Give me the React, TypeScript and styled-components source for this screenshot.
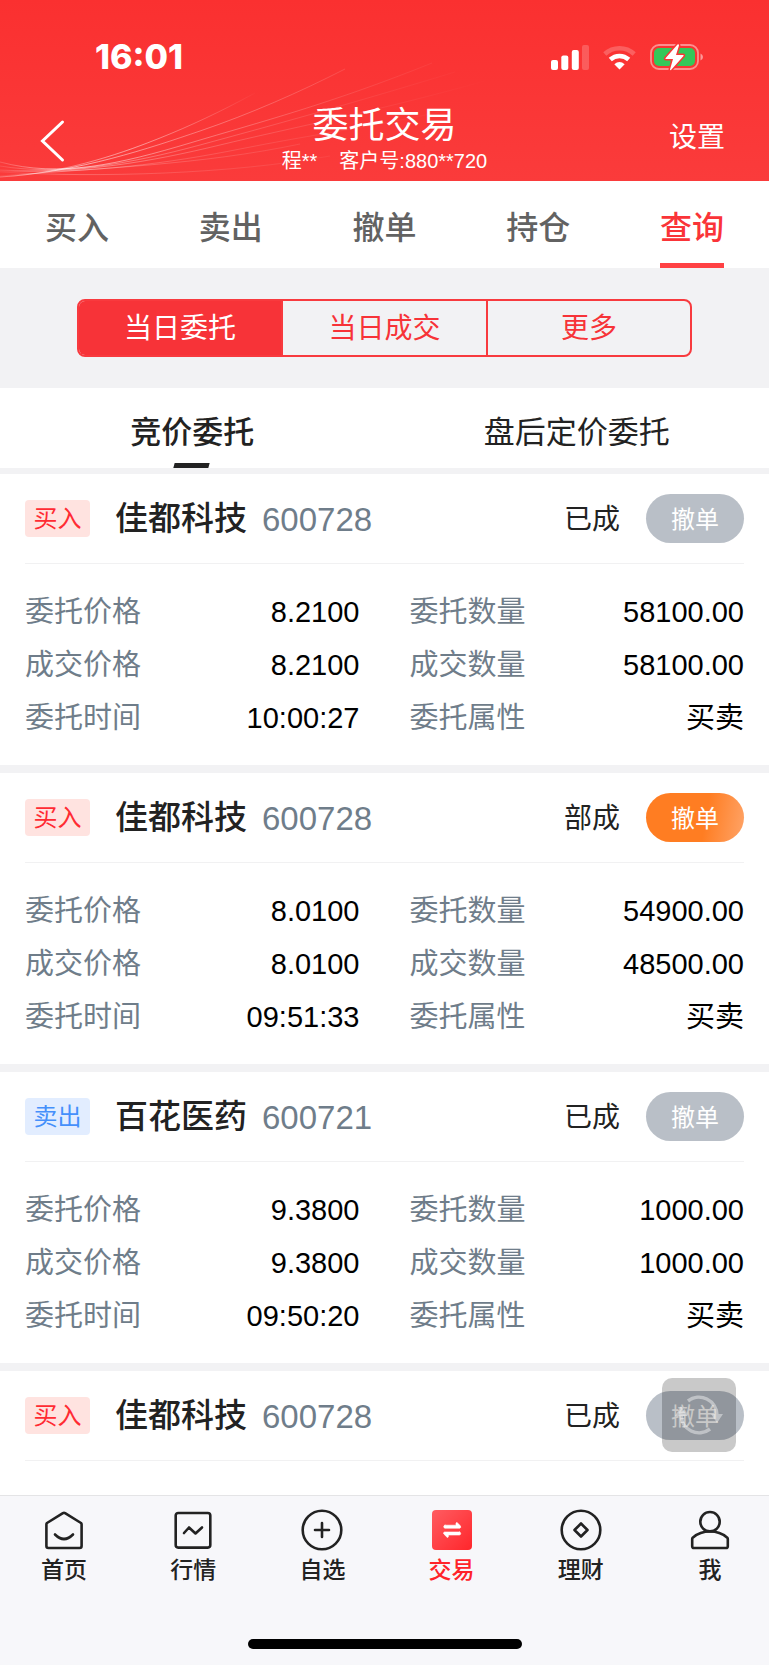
import React from "react";
import styled, { createGlobalStyle, css } from "styled-components";

const GlobalStyle = createGlobalStyle`
  *, *::before, *::after { box-sizing: border-box; }
  body {
    margin: 0;
    background: #fff;
    color: #222;
    font-family: "Liberation Sans", "Noto Sans CJK SC", sans-serif;
  }
  button {
    margin: 0;
    padding: 0;
    border: 0;
    background: none;
    color: inherit;
    font: inherit;
    cursor: pointer;
  }
  h1, h2, dl, dd, dt { margin: 0; font-weight: 400; }
`;

const Screen = styled.div`
  position: relative;
  display: flex;
  flex-direction: column;
  height: 100vh;
  overflow: hidden;
  background: #fff;
`;

/* ---------- header ---------- */

const Header = styled.header`
  position: relative;
  flex: none;
  height: 181px;
  color: #fff;
  background: linear-gradient(#fa3030, #fa3b3b);
`;

const Waves = styled.svg`
  position: absolute;
  left: 0;
  bottom: 0;
`;

const StatusBar = styled.div`
  position: relative;
  display: flex;
  align-items: center;
  justify-content: space-between;
  height: 104px;
  padding: 10px 65px 0 95px;
`;

const Clock = styled.time`
  font: 800 34px/40px Inter, sans-serif;
`;

const StatusIcons = styled.div`
  display: flex;
  align-items: center;
  gap: 14px;
`;

const TitleBar = styled.div`
  position: relative;
  display: grid;
  grid-template-columns: 1fr auto 1fr;
  align-items: center;
  height: 74px;
  padding: 0 40px;
`;

const BackButton = styled.button`
  justify-self: start;
  display: flex;
`;

const SettingsButton = styled.button`
  justify-self: end;
  padding: 0 4px 6px;
  font-size: 28px;
  line-height: 40px;
`;

const TitleBlock = styled.div`
  display: flex;
  flex-direction: column;
  align-items: center;
`;

const Title = styled.h1`
  font-size: 36px;
  line-height: 40px;
`;

const Account = styled.div`
  display: flex;
  gap: 22px;
  font-size: 20px;
  line-height: 30px;
`;

/* ---------- navigation ---------- */

const MainTabs = styled.nav`
  display: flex;
  flex: none;
  height: 87px;
`;

const MainTab = styled.button<{ $active?: boolean }>`
  flex: 1;
  display: flex;
  justify-content: center;
  font-size: 32px;
  font-weight: 500;
  color: ${(p) => (p.$active ? "#fa3438" : "#626262")};

  span {
    display: flex;
    align-items: center;
    height: 87px;
    padding-top: 6px;
    border-bottom: 5px solid ${(p) => (p.$active ? "#ff4144" : "transparent")};
  }
`;

const SegmentArea = styled.div`
  flex: none;
  padding: 31px 10%;
  background: #f2f2f4;
`;

const Segments = styled.div`
  display: flex;
  height: 58px;
  border: 2px solid #f83a3e;
  border-radius: 8px;
  overflow: hidden;
`;

const Segment = styled.button<{ $active?: boolean }>`
  flex: 1;
  padding-bottom: 4px;
  font-size: 28px;
  color: #f73338;

  & + & { border-left: 2px solid #f83a3e; }

  ${(p) =>
    p.$active &&
    css`
      background: #f73338;
      color: #fff;
    `}
`;

const SubTabs = styled.div`
  display: flex;
  flex: none;
  height: 86px;
  padding-bottom: 6px;
  background: linear-gradient(#fff 80px, #f2f2f4 80px);
`;

const SubTab = styled.button<{ $active?: boolean }>`
  position: relative;
  flex: 1;
  padding-top: 3px;
  font-size: 31px;
  font-weight: ${(p) => (p.$active ? 500 : 400)};

  ${(p) =>
    p.$active &&
    css`
      &::after {
        content: "";
        position: absolute;
        left: 50%;
        bottom: 0;
        width: 35px;
        height: 5px;
        margin-left: -18px;
        background: #222;
        transform: skewX(-15deg);
      }
    `}
`;

/* ---------- order list ---------- */

const OrderList = styled.main`
  flex: 1;
  min-height: 0;
  overflow-y: auto;
  scrollbar-width: none;
`;

const Card = styled.article`
  padding: 0 25px;

  & + & { border-top: 8px solid #f2f2f4; }
`;

const CardHead = styled.div`
  display: flex;
  align-items: center;
  height: 90px;
  border-bottom: 1px solid #f1f1f2;
`;

const SideTag = styled.span<{ $side: Side }>`
  width: 65px;
  margin-right: 25px;
  border-radius: 4px;
  font-size: 24px;
  line-height: 37px;
  text-align: center;
  color: ${(p) => (p.$side === "买入" ? "#ff2b33" : "#4590fb")};
  background: ${(p) => (p.$side === "买入" ? "#ffe3e0" : "#e2edff")};
`;

const StockName = styled.h2`
  margin-right: 15px;
  font-size: 33px;
  line-height: 48px;
  font-weight: 500;
`;

const StockCode = styled.span`
  font-size: 33px;
  line-height: 48px;
  padding-top: 2px;
  color: #6f7d8a;
`;

const OrderState = styled.span`
  margin: 0 26px 0 auto;
  padding-bottom: 4px;
  font-size: 28px;
`;

const CancelButton = styled.button<{ $enabled: boolean }>`
  width: 98px;
  height: 49px;
  padding-bottom: 3px;
  border-radius: 25px;
  font-size: 24px;
  color: #fff;
  background: ${(p) =>
    p.$enabled ? "linear-gradient(100deg, #ff7d22 60%, #ffa468)" : "#b9bfc7"};
`;

const Fields = styled.dl`
  display: grid;
  grid-template-columns: 1fr 1fr;
  column-gap: 50px;
  padding: 22px 0 20px;
`;

const Field = styled.div`
  display: flex;
  justify-content: space-between;
  font-size: 29px;
  line-height: 53px;
`;

const FieldLabel = styled.dt`
  color: #6f7d8a;
`;

const FieldValue = styled.dd`
  color: #000;
`;

const RefreshButton = styled.button`
  position: absolute;
  right: 33px;
  bottom: 213px;
  display: flex;
  align-items: center;
  justify-content: center;
  width: 74px;
  height: 74px;
  border-radius: 10px;
  background: rgba(0, 0, 0, 0.21);
`;

/* ---------- bottom bar ---------- */

const BottomBar = styled.footer`
  flex: none;
  height: 170px;
  border-top: 1px solid #e4e4e6;
  background: #f7f7fa;
`;

const BottomNav = styled.nav`
  display: flex;
  justify-content: space-between;
  height: 143px;
  padding: 13px 19px 0 24px;
`;

const NavItem = styled.button<{ $active?: boolean }>`
  display: flex;
  flex-direction: column;
  align-items: center;
  width: 80px;
  height: 82px;
  font-size: 23px;
  line-height: 38px;
  font-weight: 500;
  color: ${(p) => (p.$active ? "#ff2329" : "#222")};
`;

const HomeIndicator = styled.div`
  width: 274px;
  height: 10px;
  margin: 0 auto;
  border-radius: 5px;
  background: #000;
`;

/* ---------- drawings ---------- */

const HeaderWaves = () => (
  <Waves width="490" height="125" viewBox="0 56 490 125" fill="none" aria-hidden="true">
    <defs>
      <linearGradient id="fade" gradientUnits="userSpaceOnUse" x1="0" y1="0" x2="490" y2="0">
        <stop offset="0" stopColor="#fff" stopOpacity="0.15" />
        <stop offset="0.13" stopColor="#fff" stopOpacity="0.6" />
        <stop offset="0.35" stopColor="#fff" stopOpacity="0.35" />
        <stop offset="0.7" stopColor="#fff" stopOpacity="0.12" />
        <stop offset="1" stopColor="#fff" stopOpacity="0" />
      </linearGradient>
      <linearGradient id="fadeShort" gradientUnits="userSpaceOnUse" x1="0" y1="0" x2="260" y2="0">
        <stop offset="0" stopColor="#fff" stopOpacity="0.15" />
        <stop offset="0.5" stopColor="#fff" stopOpacity="0.5" />
        <stop offset="1" stopColor="#fff" stopOpacity="0" />
      </linearGradient>
    </defs>
    <path d="M0 177C70 173 130 150 160 138S220 112 255 93" stroke="url(#fadeShort)" />
    <g stroke="url(#fade)">
      <path d="M0 177C80 172 150 148 200 131S300 92 345 69" />
      <path d="M0 162C60 178 120 164 190 143S330 104 432 63" />
      <path d="M0 166C60 176 130 164 200 145S350 104 455 72" opacity="0.7" />
      <path d="M0 170C80 174 150 162 220 145S370 113 485 81" opacity="0.7" />
      <path d="M0 171C90 174 170 163 240 149S370 127 440 112" opacity="0.5" />
      <path d="M0 176C100 168 200 165 300 144" opacity="0.5" />
      <path d="M0 172C100 178 230 174 330 156" opacity="0.4" />
    </g>
  </Waves>
);

const SignalIcon = () => (
  <svg width="38" height="25" viewBox="0 0 38 25" fill="#fff" aria-hidden="true">
    <rect x="0" y="15" width="7" height="10" rx="2" />
    <rect x="10.300" y="10.500" width="7" height="14.500" rx="2" />
    <rect x="20.800" y="5" width="7" height="20" rx="2" />
    <rect x="31" y="0" width="7" height="25" rx="2" opacity="0.2" />
  </svg>
);

const WifiIcon = () => (
  <svg width="33" height="25" viewBox="0 0 33 25" fill="none" stroke="#fff" aria-hidden="true">
    <path d="M1.800 9A21.500 21.500 0 0 1 31.200 9" strokeWidth="4.500" opacity="0.22" />
    <path d="M7.300 14.500A13.500 13.500 0 0 1 25.700 14.500" strokeWidth="4.500" />
    <path d="M16.500 24.500L11.300 19.200Q16.500 14.800 21.700 19.200Z" fill="#fff" stroke="none" />
  </svg>
);

const BatteryIcon = () => (
  <svg width="54" height="28" viewBox="0 0 54 28" fill="none" aria-hidden="true">
    <rect x="1" y="2" width="47" height="24" rx="8" stroke="#fff" strokeWidth="1.800" opacity="0.45" />
    <rect x="4" y="5" width="41" height="18" rx="5" fill="#34c759" />
    <path d="M50.500 10.500Q53 11.500 53 14T50.500 17.500Z" fill="#fff" opacity="0.5" />
    <path
      d="M27.500 1.500L15.500 15.200Q15 16 16 16H23L20 26.500Q20 28 21.500 26.500L33.500 13Q34 12 33 12H26L29 2.500Q28.800 .5 27.500 1.500Z"
      fill="#fff"
      stroke="#fa3535"
      strokeWidth="3"
      paintOrder="stroke"
    />
  </svg>
);

const BackIcon = () => (
  <svg width="26" height="44" viewBox="0 0 26 44" fill="none" aria-hidden="true">
    <path d="M22.500 3L2.500 22L22.500 41" stroke="#fff" strokeWidth="3" strokeLinecap="round" />
  </svg>
);

const RefreshIcon = () => (
  <svg width="48" height="44" viewBox="0 0 48 44" fill="none" stroke="#fff" strokeWidth="3.500" opacity="0.42" aria-hidden="true">
    <path d="M13 8A18 18 0 0 1 42 22" />
    <path d="M35 36A18 18 0 0 1 6 22" />
    <path d="M36 21H48L42 30Z" fill="#fff" stroke="none" />
    <path d="M0 23H12L6 13Z" fill="#fff" stroke="none" />
  </svg>
);

const NavIcon = ({ children }: { children: React.ReactNode }) => (
  <svg
    width="42"
    height="42"
    viewBox="0 0 42 42"
    fill="none"
    stroke="currentColor"
    strokeWidth="2.600"
    strokeLinecap="round"
    strokeLinejoin="round"
    aria-hidden="true"
  >
    {children}
  </svg>
);

const HomeIcon = () => (
  <NavIcon>
    <path d="M19.900 4.200Q21 3.600 22.100 4.200L38 14Q38.600 14.500 38.600 15.500V37Q38.600 39 36.600 39H5.400Q3.400 39 3.400 37V15.500Q3.400 14.500 4 14Z" />
    <path d="M12 25.500Q21 34.500 30 25.500" />
  </NavIcon>
);

const MarketIcon = () => (
  <NavIcon>
    <rect x="3.700" y="4" width="34.600" height="34.600" rx="2.500" />
    <path d="M12 24L17 18.500L23.500 24.500L30 18.500" />
  </NavIcon>
);

const WatchIcon = () => (
  <NavIcon>
    <circle cx="21" cy="21" r="19.300" />
    <path d="M14 21H28M21 14V28" />
  </NavIcon>
);

const TradeIcon = () => (
  <NavIcon>
    <defs>
      <linearGradient id="trade" x1="0" y1="0" x2="1" y2="1">
        <stop offset="0" stopColor="#ff5c61" />
        <stop offset="1" stopColor="#ff262b" />
      </linearGradient>
    </defs>
    <rect x="1" y="1" width="40" height="40" rx="4" fill="url(#trade)" stroke="none" />
    <path
      d="M14 16.200H25V14.200Q25.200 13.200 26.300 13.800L29.400 16.800Q30.400 18.800 28.800 19.200H14Q12.700 19 12.700 17.700T14 16.200ZM28.400 23H13.500Q12 23.400 12.800 25L16 28.200Q17.300 28.800 17.400 27.600V26H28.400Q29.700 25.800 29.700 24.500T28.400 23Z"
      fill="#fff"
      stroke="#fff"
      strokeWidth="0.600"
    />
  </NavIcon>
);

const WealthIcon = () => (
  <NavIcon>
    <circle cx="21" cy="21" r="19.300" />
    <path d="M21 14.500L27.500 21L21 27.500L14.500 21Z" />
  </NavIcon>
);

const MeIcon = () => (
  <NavIcon>
    <circle cx="21" cy="12.700" r="9.700" />
    <path d="M21 22.400C28 22.400 34 25 38.300 28.700Q38.800 29.200 38.800 30V37.200Q38.800 39 37 39H5Q3.200 39 3.200 37.200V30Q3.200 29.200 3.700 28.700C8 25 14 22.400 21 22.400Z" />
  </NavIcon>
);

/* ---------- data ---------- */

type Side = "买入" | "卖出";

interface Order {
  side: Side;
  name: string;
  code: string;
  state: string;
  cancellable?: boolean;
  fields?: [string, string][];
}

const details = (
  price: string,
  quantity: string,
  dealPrice: string,
  dealQuantity: string,
  time: string
): [string, string][] => [
  ["委托价格", price],
  ["委托数量", quantity],
  ["成交价格", dealPrice],
  ["成交数量", dealQuantity],
  ["委托时间", time],
  ["委托属性", "买卖"],
];

const orders: Order[] = [
  {
    side: "买入",
    name: "佳都科技",
    code: "600728",
    state: "已成",
    fields: details("8.2100", "58100.00", "8.2100", "58100.00", "10:00:27"),
  },
  {
    side: "买入",
    name: "佳都科技",
    code: "600728",
    state: "部成",
    cancellable: true,
    fields: details("8.0100", "54900.00", "8.0100", "48500.00", "09:51:33"),
  },
  {
    side: "卖出",
    name: "百花医药",
    code: "600721",
    state: "已成",
    fields: details("9.3800", "1000.00", "9.3800", "1000.00", "09:50:20"),
  },
  { side: "买入", name: "佳都科技", code: "600728", state: "已成" },
];

const mainTabs = ["买入", "卖出", "撤单", "持仓", "查询"];
const segments = ["当日委托", "当日成交", "更多"];
const subTabs = ["竞价委托", "盘后定价委托"];

const navItems = [
  { label: "首页", Icon: HomeIcon },
  { label: "行情", Icon: MarketIcon },
  { label: "自选", Icon: WatchIcon },
  { label: "交易", Icon: TradeIcon },
  { label: "理财", Icon: WealthIcon },
  { label: "我", Icon: MeIcon },
];

const OrderCard = ({ order }: { order: Order }) => (
  <Card>
    <CardHead>
      <SideTag $side={order.side}>{order.side}</SideTag>
      <StockName>{order.name}</StockName>
      <StockCode>{order.code}</StockCode>
      <OrderState>{order.state}</OrderState>
      <CancelButton $enabled={!!order.cancellable} disabled={!order.cancellable}>
        撤单
      </CancelButton>
    </CardHead>
    {order.fields && (
      <Fields>
        {order.fields.map(([label, value]) => (
          <Field key={label}>
            <FieldLabel>{label}</FieldLabel>
            <FieldValue>{value}</FieldValue>
          </Field>
        ))}
      </Fields>
    )}
  </Card>
);

export default function App() {
  return (
    <>
      <GlobalStyle />
      <Screen>
        <Header>
          <HeaderWaves />
          <StatusBar>
            <Clock>16:01</Clock>
            <StatusIcons>
              <SignalIcon />
              <WifiIcon />
              <BatteryIcon />
            </StatusIcons>
          </StatusBar>
          <TitleBar>
            <BackButton aria-label="返回">
              <BackIcon />
            </BackButton>
            <TitleBlock>
              <Title>委托交易</Title>
              <Account>
                <span>程**</span>
                <span>客户号:880**720</span>
              </Account>
            </TitleBlock>
            <SettingsButton>设置</SettingsButton>
          </TitleBar>
        </Header>

        <MainTabs>
          {mainTabs.map((tab) => (
            <MainTab key={tab} $active={tab === "查询"}>
              <span>{tab}</span>
            </MainTab>
          ))}
        </MainTabs>

        <SegmentArea>
          <Segments>
            {segments.map((segment) => (
              <Segment key={segment} $active={segment === "当日委托"}>
                {segment}
              </Segment>
            ))}
          </Segments>
        </SegmentArea>

        <SubTabs>
          {subTabs.map((tab) => (
            <SubTab key={tab} $active={tab === "竞价委托"}>
              {tab}
            </SubTab>
          ))}
        </SubTabs>

        <OrderList>
          {orders.map((order, index) => (
            <OrderCard key={index} order={order} />
          ))}
        </OrderList>

        <RefreshButton aria-label="刷新">
          <RefreshIcon />
        </RefreshButton>

        <BottomBar>
          <BottomNav>
            {navItems.map(({ label, Icon }) => (
              <NavItem key={label} $active={label === "交易"}>
                <Icon />
                {label}
              </NavItem>
            ))}
          </BottomNav>
          <HomeIndicator />
        </BottomBar>
      </Screen>
    </>
  );
}
